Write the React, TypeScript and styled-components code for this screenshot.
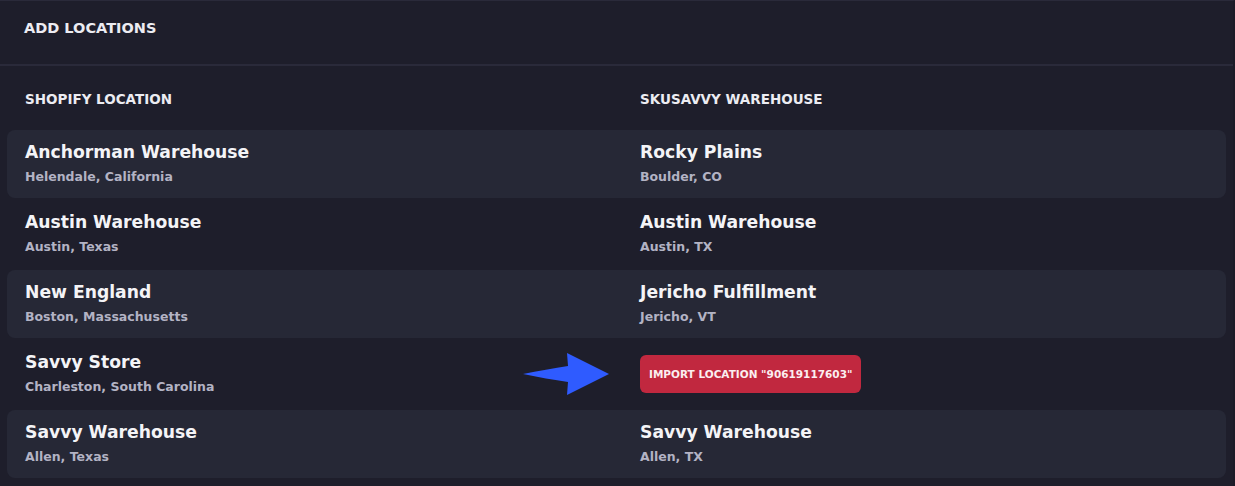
import React from "react";
import styled, { createGlobalStyle } from "styled-components";

const GlobalStyle = createGlobalStyle`
  html, body {
    margin: 0;
    padding: 0;
    background: #1e1e2b;
  }
  body {
    font-family: "DejaVu Sans", "Liberation Sans", sans-serif;
    -webkit-font-smoothing: antialiased;
  }
`;

type Location = { name: string; place: string };

const rows: { shopify: Location; savvy: Location | null }[] = [
  {
    shopify: { name: "Anchorman Warehouse", place: "Helendale, California" },
    savvy: { name: "Rocky Plains", place: "Boulder, CO" },
  },
  {
    shopify: { name: "Austin Warehouse", place: "Austin, Texas" },
    savvy: { name: "Austin Warehouse", place: "Austin, TX" },
  },
  {
    shopify: { name: "New England", place: "Boston, Massachusetts" },
    savvy: { name: "Jericho Fulfillment", place: "Jericho, VT" },
  },
  {
    shopify: { name: "Savvy Store", place: "Charleston, South Carolina" },
    savvy: null,
  },
  {
    shopify: { name: "Savvy Warehouse", place: "Allen, Texas" },
    savvy: { name: "Savvy Warehouse", place: "Allen, TX" },
  },
];

export default function App() {
  return (
    <>
      <GlobalStyle />
      <Panel>
        <PanelHeader>
          <Title>Add Locations</Title>
        </PanelHeader>
        <Divider />
        <Table>
          <HeadRow>
            <HeadCell>Shopify Location</HeadCell>
            <HeadCell>SkuSavvy Warehouse</HeadCell>
          </HeadRow>
          {rows.map((row, i) => (
            <Row key={i} $striped={i % 2 === 0}>
              <Cell>
                <LocationText loc={row.shopify} />
                {!row.savvy && <Pointer />}
              </Cell>
              <Cell>
                {row.savvy ? (
                  <LocationText loc={row.savvy} />
                ) : (
                  <ImportButton>Import location "90619117603"</ImportButton>
                )}
              </Cell>
            </Row>
          ))}
        </Table>
      </Panel>
    </>
  );
}

function LocationText({ loc }: { loc: Location }) {
  return (
    <TextBlock>
      <Name>{loc.name}</Name>
      <Place>{loc.place}</Place>
    </TextBlock>
  );
}

function Pointer() {
  return (
    <Arrow width="88" height="44" viewBox="0 0 88 44">
      <path
        d="M1 22 C16 19 32 16 46 14 L45 1 L87 22 L45 43 L46 30 C32 28 16 25 1 22 Z"
        fill="#2f5bff"
      />
    </Arrow>
  );
}

const Panel = styled.div`
  background: #1e1e2b;
  border-top: 1px solid #2a2a3a;
  border-right: 2px solid #1b1b27;
  min-height: 486px;
  box-sizing: border-box;
`;

const PanelHeader = styled.div`
  height: 63px;
  display: flex;
  align-items: center;
  padding: 0 24px;
  box-sizing: border-box;
`;

const Title = styled.h1`
  margin: 0;
  font-size: 14.5px;
  font-weight: 700;
  text-transform: uppercase;
  color: #ececf2;
  margin-top: -10px;
`;

const Divider = styled.div`
  height: 2px;
  background: #2a2a3a;
`;

const Table = styled.div`
  padding: 0 7px 0 7px;
  display: flex;
  flex-direction: column;
  gap: 2px;
`;

const HeadRow = styled.div`
  display: grid;
  grid-template-columns: 615px 1fr;
  padding: 3px 18px 0;
  height: 62px;
  box-sizing: border-box;
  align-items: center;
`;

const HeadCell = styled.div`
  font-size: 13.5px;
  font-weight: 700;
  text-transform: uppercase;
  color: #ececf2;
`;

const Row = styled.div<{ $striped: boolean }>`
  display: grid;
  grid-template-columns: 615px 1fr;
  padding: 0 18px;
  height: 68px;
  border-radius: 8px;
  background: ${(p) => (p.$striped ? "#262836" : "transparent")};
`;

const Cell = styled.div`
  display: flex;
  align-items: center;
`;

const TextBlock = styled.div`
  display: flex;
  flex-direction: column;
  gap: 5px;
  margin-top: -2px;
`;

const Name = styled.div`
  font-size: 17.2px;
  line-height: 22px;
  font-weight: 700;
  color: #f4f4f7;
`;

const Place = styled.div`
  font-size: 12.5px;
  line-height: 18px;
  font-weight: 700;
  color: #b3b3c4;
`;

const Arrow = styled.svg`
  margin-left: auto;
  margin-right: 30px;
  display: block;
`;

const ImportButton = styled.button`
  height: 38px;
  padding: 0 9px;
  border: none;
  border-radius: 6px;
  background: #c1283f;
  color: #fbeef0;
  font-family: "DejaVu Sans", "Liberation Sans", sans-serif;
  font-size: 10.5px;
  font-weight: 700;
  text-transform: uppercase;
  cursor: pointer;
`;
